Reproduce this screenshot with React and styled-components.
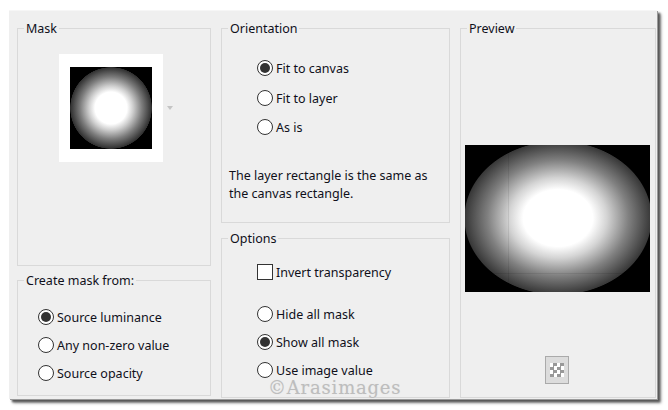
import React from "react";
import styled, { createGlobalStyle } from "styled-components";

const Global = createGlobalStyle`
  html, body { margin: 0; padding: 0; background: #fff; }
  body { width: 668px; height: 410px; overflow: hidden; font-family: "Noto Sans", "Liberation Sans", sans-serif; }
`;

const Page = styled.div`
  padding: 10px 0 0 9px;
`;

const Dialog = styled.div`
  position: relative;
  box-sizing: border-box;
  width: 648px;
  height: 389px;
  padding: 9px 1px 0 8px;
  display: grid;
  grid-template-columns: 194px 229px 196px;
  column-gap: 10px;
  background: #efefef;
  border-top: 1px solid #f6f6f6;
  box-shadow: 1px 1px 0 #9a9a9a, 3px 3px 2px #555, 4px 4px 3px #999;
`;

const Column = styled.div`
  display: flex;
  flex-direction: column;
  gap: ${p => p.$gap || 0}px;
`;

const Group = styled.fieldset`
  box-sizing: border-box;
  margin: 0;
  padding: 0;
  min-width: 0;
  height: ${p => p.$height}px;
  border: 1px solid #d9d9d9;
  display: flex;
  flex-direction: column;
`;

const Legend = styled.legend`
  margin-left: 6px;
  padding: 0 2px;
  height: 16px;
  font-size: 12.5px;
  line-height: 18px;
  color: #10101a;
`;

const Choices = styled.div`
  display: flex;
  flex-direction: column;
  padding-left: ${p => p.$left}px;
`;

const Label = styled.span`
  padding-top: 2px;
  font-size: 12.5px;
  line-height: 16px;
  color: #10101a;
  white-space: nowrap;
`;

const Radio = styled.span`
  box-sizing: border-box;
  flex: none;
  width: 16px;
  height: 16px;
  border-radius: 50%;
  border: 1px solid #333;
  background: #fff;
  display: flex;
  align-items: center;
  justify-content: center;
  &::after {
    content: "";
    display: ${p => (p.$on ? "block" : "none")};
    width: 10px;
    height: 10px;
    border-radius: 50%;
    background: #333;
  }
`;

const Check = styled.span`
  box-sizing: border-box;
  flex: none;
  width: 16px;
  height: 16px;
  border: 1px solid #333;
  background: #fff;
`;

const Row = styled.div`
  display: flex;
  align-items: center;
  gap: 3px;
  height: 16px;
  margin-top: ${p => p.$top}px;
`;

const MaskBox = styled.div`
  display: flex;
  align-items: center;
  margin: 18px 0 0 41px;
`;

const MaskFrame = styled.div`
  box-sizing: border-box;
  width: 104px;
  height: 108px;
  padding: 13px 11px;
  background: #fff;
`;

const MaskImage = styled.div`
  width: 82px;
  height: 82px;
  background:
    radial-gradient(circle at 50% 50%, #fff 0, #fff 16px, #cfcfcf 22px, #7c7c7c 31px, #303030 40.5px, #000 41px);
`;

const Arrow = styled.span`
  width: 0;
  height: 0;
  margin-left: 4px;
  border-left: 3px solid transparent;
  border-right: 3px solid transparent;
  border-top: 4px solid #c4c4c4;
`;

const Note = styled.p`
  margin: 32px 0 0 7px;
  font-size: 12.5px;
  line-height: 18px;
  color: #10101a;
`;

const PreviewArt = styled.svg`
  display: block;
  margin: 109px 0 0 4px;
`;

const Swatch = styled.div`
  box-sizing: border-box;
  width: 24px;
  height: 28px;
  margin: 64px 0 0 84px;
  border: 1px solid #aaa;
  background: #dcdcdc;
  display: flex;
  align-items: center;
  justify-content: center;
`;

const Checker = styled.span`
  width: 14px;
  height: 14px;
  background: repeating-conic-gradient(#999 0 25%, #fff 0 50%) 0 0 / 7px 7px;
`;

const Watermark = styled.span`
  position: absolute;
  left: 259px;
  top: 364px;
  font-family: "DejaVu Serif", "Liberation Serif", serif;
  font-size: 18px;
  line-height: 26px;
  letter-spacing: 0.8px;
  color: #bdbdbd;
  text-shadow: 0 0 1px #ddd;
  white-space: nowrap;
`;

const Option = ({ on, top, children }) => (
  <Row $top={top}>
    <Radio $on={on} />
    <Label>{children}</Label>
  </Row>
);

export default function App() {
  return (
    <Page>
      <Global />
      <Dialog>
        <Column $gap={6}>
          <Group $height={246}>
            <Legend>Mask</Legend>
            <MaskBox>
              <MaskFrame><MaskImage /></MaskFrame>
              <Arrow />
            </MaskBox>
          </Group>
          <Group $height={124}>
            <Legend>Create mask from:</Legend>
            <Choices $left={20}>
              <Option on top={21}>Source luminance</Option>
              <Option top={12}>Any non-zero value</Option>
              <Option top={12}>Source opacity</Option>
            </Choices>
          </Group>
        </Column>
        <Column $gap={7}>
          <Group $height={203}>
            <Legend>Orientation</Legend>
            <Choices $left={35}>
              <Option on top={24}>Fit to canvas</Option>
              <Option top={14}>Fit to layer</Option>
              <Option top={13}>As is</Option>
            </Choices>
            <Note>The layer rectangle is the same as<br />the canvas rectangle.</Note>
          </Group>
          <Group $height={168}>
            <Legend>Options</Legend>
            <Choices $left={35}>
              <Row $top={18}>
                <Check />
                <Label>Invert transparency</Label>
              </Row>
              <Option top={26}>Hide all mask</Option>
              <Option on top={12}>Show all mask</Option>
              <Option top={12}>Use image value</Option>
            </Choices>
          </Group>
        </Column>
        <Column>
          <Group $height={378}>
            <Legend>Preview</Legend>
            <PreviewArt width="185" height="147" viewBox="0 0 185 147">
              <defs>
                <radialGradient id="glow" gradientUnits="userSpaceOnUse" cx="0" cy="0" r="1"
                  gradientTransform="translate(93 73) scale(94 77)">
                  <stop offset="0.37" stopColor="#fff" />
                  <stop offset="0.52" stopColor="#d4d4d4" />
                  <stop offset="0.75" stopColor="#808080" />
                  <stop offset="0.99" stopColor="#383838" />
                  <stop offset="1" stopColor="#000" />
                </radialGradient>
              </defs>
              <rect width="185" height="147" fill="url(#glow)" />
              <path d="M43.5 6V140M24 128.5H160" stroke="#000" strokeOpacity="0.08" fill="none" />
            </PreviewArt>
            <Swatch><Checker /></Swatch>
          </Group>
        </Column>
        <Watermark>©Arasimages</Watermark>
      </Dialog>
    </Page>
  );
}
